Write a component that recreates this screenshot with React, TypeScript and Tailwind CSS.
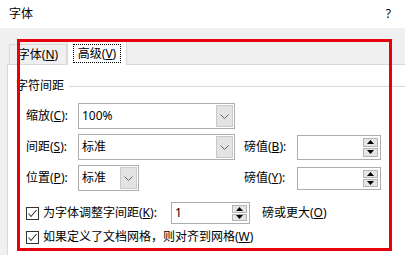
import React from "react";

const Chevron = () => (
  <svg width="9" height="5" viewBox="0 0 9 5">
    <polyline points="0.5,0.5 4.5,4.5 8.5,0.5" fill="none" stroke="#606060" strokeWidth="1" />
  </svg>
);

const Combo = ({ value, width }: { value: string; width: string }) => (
  <div className={`${width} h-[26px] border border-[#adadad] bg-white flex items-stretch`}>
    <div className="flex-1 flex items-center pl-[3px]">{value}</div>
    <div className="w-[17px] m-px border border-[#c9c9c9] bg-[#e3e3e3] flex items-center justify-center">
      <Chevron />
    </div>
  </div>
);

const Tri = ({ up }: { up?: boolean }) => (
  <svg width="7" height="4" viewBox="0 0 7 4">
    {up ? <polygon points="0,4 7,4 3.5,0" fill="#000" /> : <polygon points="0,0 7,0 3.5,4" fill="#000" />}
  </svg>
);

const Spin = ({ value, width, height }: { value?: string; width: string; height: string }) => (
  <div className={`${width} ${height} border border-[#adadad] bg-white flex items-stretch`}>
    <div className="flex-1 flex items-center pl-[3px]">{value}</div>
    <div className="w-[15px] my-[2px] mr-[2px] flex flex-col gap-px">
      <div className="flex-1 border border-[#b4b4b4] bg-[#e5e5e5] flex items-center justify-center">
        <Tri up />
      </div>
      <div className="flex-1 border border-[#b4b4b4] bg-[#e5e5e5] flex items-center justify-center">
        <Tri />
      </div>
    </div>
  </div>
);

const Check = () => (
  <div className="w-[13px] h-[13px] border border-[#333] bg-white flex items-center justify-center shrink-0">
    <svg width="11" height="11" viewBox="0 0 11 11">
      <polyline points="1.5,5.5 4,8.5 9.5,2" fill="none" stroke="#333" strokeWidth="1.1" />
    </svg>
  </div>
);

export default function App() {
  return (
    <div className="w-[405px] h-[255px] overflow-hidden bg-white relative flex flex-col text-[12px] leading-[16px] text-black font-[family-name:'Noto_Sans','Noto_Sans_CJK_SC',sans-serif]">
      <div className="h-[28px] shrink-0 flex items-center justify-between pl-[9px] pr-[14px]">
        <span>字体</span>
        <span>?</span>
      </div>
      <div className="flex-1 bg-[#f0f0f0] pl-[7px] pt-[13px] flex flex-col">
        <div className="h-[24px] flex items-end relative z-10 shrink-0">
          <div className="ml-[2px] mb-px w-[58px] h-[20px] border border-b-0 border-[#d9d9d9] bg-[#f0f0f0] flex items-center justify-center">
            <span>
              字体(<u>N</u>)
            </span>
          </div>
          <div className="w-[60px] h-[24px] bg-white border border-b-0 border-[#d9d9d9] flex items-start justify-center pt-[2px]">
            <div className="h-[19px] px-[4px] border border-dotted border-black flex items-center">
              <span>
                高级(<u>V</u>)
              </span>
            </div>
          </div>
        </div>
        <div className="flex-1 -mt-px bg-white border-l border-t border-[#d9d9d9] pt-[13px] flex flex-col">
          <div className="h-[16px] flex items-center pl-[8px]">
            <span>字符间距</span>
            <div className="flex-1 h-px bg-[#dcdcdc] ml-[5px]" />
          </div>

          <div className="mt-[9px] h-[26px] flex items-center pl-[18px]">
            <span className="w-[52px]">
              缩放(<u>C</u>):
            </span>
            <Combo value="100%" width="w-[157px]" />
          </div>

          <div className="mt-[5px] h-[26px] flex items-center pl-[18px]">
            <span className="w-[52px]">
              间距(<u>S</u>):
            </span>
            <Combo value="标准" width="w-[157px]" />
            <span className="ml-[9px] w-[53px]">
              磅值(<u>B</u>):
            </span>
            <Spin width="w-[84px]" height="h-[25px]" />
          </div>

          <div className="mt-[5px] h-[26px] flex items-center pl-[18px]">
            <span className="w-[52px]">
              位置(<u>P</u>):
            </span>
            <div className="w-[157px]">
              <Combo value="标准" width="w-[61px]" />
            </div>
            <span className="ml-[9px] w-[53px]">
              磅值(<u>Y</u>):
            </span>
            <Spin width="w-[84px]" height="h-[23px]" />
          </div>

          <div className="mt-[10px] h-[24px] flex items-center pl-[18px]">
            <Check />
            <span className="ml-[4px] w-[128px]">
              为字体调整字间距(<u>K</u>):
            </span>
            <Spin value="1" width="w-[79px]" height="h-[22px]" />
            <span className="ml-[12px]">
              磅或更大(<u>O</u>)
            </span>
          </div>

          <div className="mt-[4px] h-[16px] flex items-center pl-[18px]">
            <Check />
            <span className="ml-[4px]">
              如果定义了文档网格，则对齐到网格(<u>W</u>)
            </span>
          </div>
        </div>
      </div>
      <div className="absolute left-[17px] top-[39px] w-[375px] h-[212px] border-[3px] border-[#e8000b] pointer-events-none z-20" />
    </div>
  );
}
